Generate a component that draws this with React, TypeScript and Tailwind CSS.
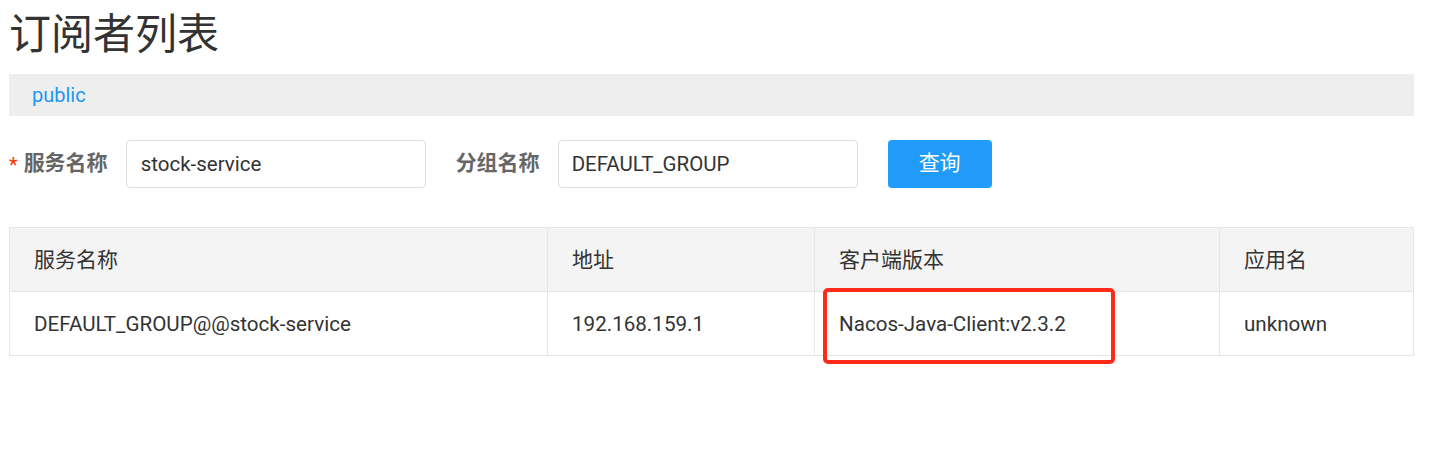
import React from "react";

const font = { fontFamily: 'Roboto, "Noto Sans CJK SC", sans-serif' };

export default function App() {
  const cols = ["w-[538px]", "w-[267px]", "w-[405px]", "flex-1"];
  const headers = ["服务名称", "地址", "客户端版本", "应用名"];
  const row = ["DEFAULT_GROUP@@stock-service", "192.168.159.1", "Nacos-Java-Client:v2.3.2", "unknown"];
  return (
    <div className="bg-white w-[1447px] h-[454px] pl-[9px] pr-[33px]" style={font}>
      <h1 className="text-[42px] leading-[42px] pt-[14px] text-[#333333] font-normal" style={font}>
        订阅者列表
      </h1>
      <div className="mt-[18px] h-[42px] bg-[#eeeeee] flex items-center pl-[23px]">
        <span className="text-[20px] text-[#2196f3]">public</span>
      </div>
      <div className="mt-[24px] flex items-center h-[48px]">
        <div className="flex items-center">
          <span className="text-[#ff3000] text-[20px] mr-[6px] leading-none mt-[2px]">*</span>
          <span className="text-[21px] font-bold text-[#666666]">服务名称</span>
        </div>
        <div className="ml-[18px] w-[300px] h-[48px] border border-[#dcdee3] rounded-[4px] flex items-center pl-[14px] pr-[13px] text-[20.5px] text-[#333333]">
          stock-service
        </div>
        <span className="ml-[30px] text-[21px] font-bold text-[#666666]">分组名称</span>
        <div className="ml-[18px] w-[300px] h-[48px] border border-[#dcdee3] rounded-[4px] flex items-center px-[13px] text-[20.5px] text-[#333333]">
          DEFAULT_GROUP
        </div>
        <button className="ml-[30px] w-[104px] h-[48px] rounded-[4px] bg-[#209bfa] text-white text-[21px] flex items-center justify-center">
          查询
        </button>
      </div>
      <div className="relative mt-[39px] border border-[#e6e6e6]">
        <div className="flex h-[64px] bg-[#f4f4f4] border-b border-[#e6e6e6]">
          {headers.map((h, i) => (
            <div
              key={h}
              className={`${cols[i]} flex items-center pl-[24px] pt-[2px] text-[21px] text-[#333333] ${i < 3 ? "border-r border-[#e6e6e6]" : ""}`}
            >
              {h}
            </div>
          ))}
        </div>
        <div className="flex h-[63px] bg-white">
          {row.map((c, i) => (
            <div
              key={c}
              className={`${cols[i]} flex items-center pl-[24px] pt-[2px] text-[20.6px] text-[#333333] ${i < 3 ? "border-r border-[#e6e6e6]" : ""}`}
            >
              {c}
            </div>
          ))}
        </div>
        <div className="absolute left-[813px] top-[60px] w-[292px] h-[76px] border-[4px] border-[#ff2a1a] rounded-[5px]" />
      </div>
    </div>
  );
}
